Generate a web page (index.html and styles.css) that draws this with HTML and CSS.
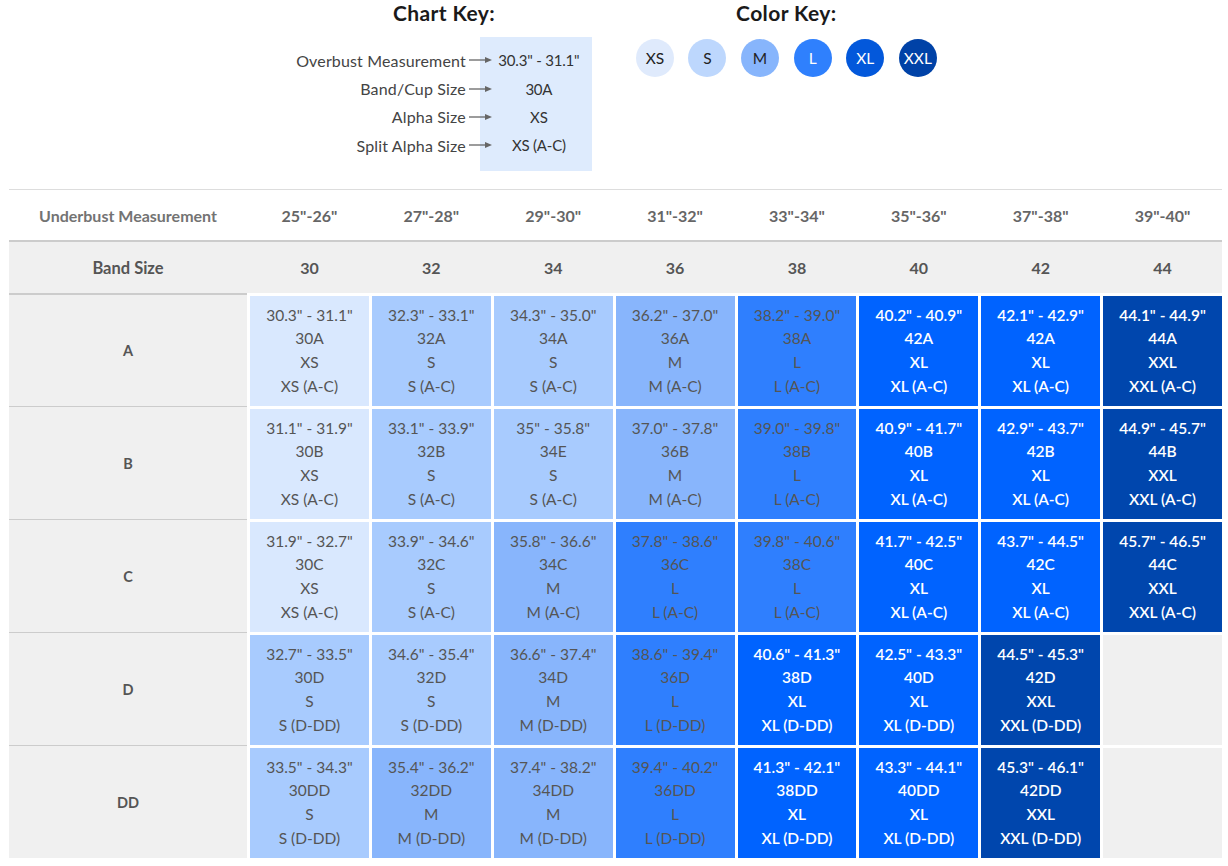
FILE: index.html
```html
<!DOCTYPE html>
<html lang="en">
<head>
<meta charset="utf-8">
<title>Bra Size Chart</title>
<link rel="stylesheet" href="styles.css">
</head>
<body>
<div class="page">
  <div class="keys">
    <div class="chart-key">
      <h2 class="key-title">Chart Key:</h2>
      <div class="key-body">
        <div class="key-labels">
          <div class="key-label">Overbust Measurement<svg class="arrow" width="23" height="8" viewBox="0 0 23 8"><line x1="0" y1="4" x2="18" y2="4" stroke="#666" stroke-width="1.3"/><path d="M16 1 L23 4 L16 7 Z" fill="#666"/></svg></div>
          <div class="key-label">Band/Cup Size<svg class="arrow" width="23" height="8" viewBox="0 0 23 8"><line x1="0" y1="4" x2="18" y2="4" stroke="#666" stroke-width="1.3"/><path d="M16 1 L23 4 L16 7 Z" fill="#666"/></svg></div>
          <div class="key-label">Alpha Size<svg class="arrow" width="23" height="8" viewBox="0 0 23 8"><line x1="0" y1="4" x2="18" y2="4" stroke="#666" stroke-width="1.3"/><path d="M16 1 L23 4 L16 7 Z" fill="#666"/></svg></div>
          <div class="key-label">Split Alpha Size<svg class="arrow" width="23" height="8" viewBox="0 0 23 8"><line x1="0" y1="4" x2="18" y2="4" stroke="#666" stroke-width="1.3"/><path d="M16 1 L23 4 L16 7 Z" fill="#666"/></svg></div>
        </div>
        <div class="key-box">
          <div class="key-value">30.3" - 31.1"</div>
          <div class="key-value">30A</div>
          <div class="key-value">XS</div>
          <div class="key-value">XS (A-C)</div>
        </div>
      </div>
    </div>
    <div class="color-key">
      <h2 class="key-title">Color Key:</h2>
      <div class="dots">
        <span class="dot dot-xs">XS</span>
        <span class="dot dot-s">S</span>
        <span class="dot dot-m">M</span>
        <span class="dot dot-l">L</span>
        <span class="dot dot-xl">XL</span>
        <span class="dot dot-xxl">XXL</span>
      </div>
    </div>
  </div>

  <div class="chart">
    <div class="row row-measure">
      <div class="head-label">Underbust Measurement</div>
      <div class="head">25"-26"</div>
      <div class="head">27"-28"</div>
      <div class="head">29"-30"</div>
      <div class="head">31"-32"</div>
      <div class="head">33"-34"</div>
      <div class="head">35"-36"</div>
      <div class="head">37"-38"</div>
      <div class="head">39"-40"</div>
    </div>
    <div class="row row-band">
      <div class="band-label">Band Size</div>
      <div class="band">30</div>
      <div class="band">32</div>
      <div class="band">34</div>
      <div class="band">36</div>
      <div class="band">38</div>
      <div class="band">40</div>
      <div class="band">42</div>
      <div class="band">44</div>
    </div>

    <div class="row row-cup">
      <div class="cup">A</div>
      <div class="cell xs"><span>30.3" - 31.1"</span><span>30A</span><span>XS</span><span>XS (A-C)</span></div>
      <div class="cell s"><span>32.3" - 33.1"</span><span>32A</span><span>S</span><span>S (A-C)</span></div>
      <div class="cell s"><span>34.3" - 35.0"</span><span>34A</span><span>S</span><span>S (A-C)</span></div>
      <div class="cell m"><span>36.2" - 37.0"</span><span>36A</span><span>M</span><span>M (A-C)</span></div>
      <div class="cell l"><span>38.2" - 39.0"</span><span>38A</span><span>L</span><span>L (A-C)</span></div>
      <div class="cell xl"><span>40.2" - 40.9"</span><span>42A</span><span>XL</span><span>XL (A-C)</span></div>
      <div class="cell xl"><span>42.1" - 42.9"</span><span>42A</span><span>XL</span><span>XL (A-C)</span></div>
      <div class="cell xxl"><span>44.1" - 44.9"</span><span>44A</span><span>XXL</span><span>XXL (A-C)</span></div>
    </div>
    <div class="row row-cup">
      <div class="cup">B</div>
      <div class="cell xs"><span>31.1" - 31.9"</span><span>30B</span><span>XS</span><span>XS (A-C)</span></div>
      <div class="cell s"><span>33.1" - 33.9"</span><span>32B</span><span>S</span><span>S (A-C)</span></div>
      <div class="cell s"><span>35" - 35.8"</span><span>34E</span><span>S</span><span>S (A-C)</span></div>
      <div class="cell m"><span>37.0" - 37.8"</span><span>36B</span><span>M</span><span>M (A-C)</span></div>
      <div class="cell l"><span>39.0" - 39.8"</span><span>38B</span><span>L</span><span>L (A-C)</span></div>
      <div class="cell xl"><span>40.9" - 41.7"</span><span>40B</span><span>XL</span><span>XL (A-C)</span></div>
      <div class="cell xl"><span>42.9" - 43.7"</span><span>42B</span><span>XL</span><span>XL (A-C)</span></div>
      <div class="cell xxl"><span>44.9" - 45.7"</span><span>44B</span><span>XXL</span><span>XXL (A-C)</span></div>
    </div>
    <div class="row row-cup">
      <div class="cup">C</div>
      <div class="cell xs"><span>31.9" - 32.7"</span><span>30C</span><span>XS</span><span>XS (A-C)</span></div>
      <div class="cell s"><span>33.9" - 34.6"</span><span>32C</span><span>S</span><span>S (A-C)</span></div>
      <div class="cell m"><span>35.8" - 36.6"</span><span>34C</span><span>M</span><span>M (A-C)</span></div>
      <div class="cell l"><span>37.8" - 38.6"</span><span>36C</span><span>L</span><span>L (A-C)</span></div>
      <div class="cell l"><span>39.8" - 40.6"</span><span>38C</span><span>L</span><span>L (A-C)</span></div>
      <div class="cell xl"><span>41.7" - 42.5"</span><span>40C</span><span>XL</span><span>XL (A-C)</span></div>
      <div class="cell xl"><span>43.7" - 44.5"</span><span>42C</span><span>XL</span><span>XL (A-C)</span></div>
      <div class="cell xxl"><span>45.7" - 46.5"</span><span>44C</span><span>XXL</span><span>XXL (A-C)</span></div>
    </div>
    <div class="row row-cup">
      <div class="cup">D</div>
      <div class="cell s"><span>32.7" - 33.5"</span><span>30D</span><span>S</span><span>S (D-DD)</span></div>
      <div class="cell s"><span>34.6" - 35.4"</span><span>32D</span><span>S</span><span>S (D-DD)</span></div>
      <div class="cell m"><span>36.6" - 37.4"</span><span>34D</span><span>M</span><span>M (D-DD)</span></div>
      <div class="cell l"><span>38.6" - 39.4"</span><span>36D</span><span>L</span><span>L (D-DD)</span></div>
      <div class="cell xl"><span>40.6" - 41.3"</span><span>38D</span><span>XL</span><span>XL (D-DD)</span></div>
      <div class="cell xl"><span>42.5" - 43.3"</span><span>40D</span><span>XL</span><span>XL (D-DD)</span></div>
      <div class="cell xxl"><span>44.5" - 45.3"</span><span>42D</span><span>XXL</span><span>XXL (D-DD)</span></div>
      <div class="cell empty"></div>
    </div>
    <div class="row row-cup">
      <div class="cup">DD</div>
      <div class="cell s"><span>33.5" - 34.3"</span><span>30DD</span><span>S</span><span>S (D-DD)</span></div>
      <div class="cell m"><span>35.4" - 36.2"</span><span>32DD</span><span>M</span><span>M (D-DD)</span></div>
      <div class="cell m"><span>37.4" - 38.2"</span><span>34DD</span><span>M</span><span>M (D-DD)</span></div>
      <div class="cell l"><span>39.4" - 40.2"</span><span>36DD</span><span>L</span><span>L (D-DD)</span></div>
      <div class="cell xl"><span>41.3" - 42.1"</span><span>38DD</span><span>XL</span><span>XL (D-DD)</span></div>
      <div class="cell xl"><span>43.3" - 44.1"</span><span>40DD</span><span>XL</span><span>XL (D-DD)</span></div>
      <div class="cell xxl"><span>45.3" - 46.1"</span><span>42DD</span><span>XXL</span><span>XXL (D-DD)</span></div>
      <div class="cell empty"></div>
    </div>
  </div>
</div>
</body>
</html>
```

FILE: styles.css
```css
* { box-sizing: border-box; }

html, body {
  margin: 0;
  padding: 0;
  background: #ffffff;
}

body {
  font-family: Lato, "Open Sans", Arial, sans-serif;
  color: #555555;
}

.page {
  padding: 0 6px 0 9px;
}

/* ---------- Keys ---------- */
.keys {
  display: flex;
  justify-content: center;
  align-items: flex-start;
  gap: 44px;
  height: 189px;
  padding-left: 2px;
}

.chart-key,
.color-key {
  display: flex;
  flex-direction: column;
  align-items: center;
}

.key-title {
  margin: 0;
  font-size: 21px;
  letter-spacing: 0.4px;
  line-height: 25px;
  font-weight: 700;
  color: #1a1a1a;
}

.key-body {
  display: flex;
  margin-top: 12px;
}

.key-labels {
  position: relative;
  z-index: 1;
  margin-right: -12px;
  padding: 9px 0 11px;
}

.key-label {
  height: 28.4px;
  display: flex;
  align-items: center;
  justify-content: flex-end;
  gap: 3px;
  font-size: 16px;
  letter-spacing: 0.15px;
  color: #444444;
}

.arrow {
  display: block;
  flex: none;
}

.key-box {
  width: 112px;
  background: #deebfd;
  padding: 9px 0 11px 6px;
}

.key-value {
  height: 28.4px;
  display: flex;
  align-items: center;
  justify-content: center;
  font-size: 15px;
  letter-spacing: -0.2px;
  color: #333333;
}

.dots {
  display: flex;
  gap: 14.6px;
  margin-top: 14px;
}

.dot {
  width: 38px;
  height: 38px;
  border-radius: 50%;
  display: flex;
  align-items: center;
  justify-content: center;
  font-size: 15.5px;
  color: #222222;
}

.dot-xs { background: #dfeafc; }
.dot-s { background: #bdd7fd; }
.dot-m { background: #87b5fc; }
.dot-l { background: #2f80fd; color: #ffffff; }
.dot-xl { background: #0358db; color: #ffffff; }
.dot-xxl { background: #0042a7; color: #ffffff; }

/* ---------- Chart ---------- */
.chart {
  width: 1213px;
}

.row {
  display: grid;
  grid-template-columns: 238px repeat(8, 1fr);
  column-gap: 3px;
}

.row-measure {
  height: 53px;
  border-top: 1px solid #dddddd;
  border-bottom: 2px solid #cccccc;
  align-items: center;
  text-align: center;
  font-weight: 700;
  font-size: 16px;
}

.head-label {
  color: #737373;
}

.head {
  color: #666666;
}

.row-band {
  height: 51px;
  background: #f0f0f0;
  align-items: center;
  text-align: center;
  font-weight: 700;
  font-size: 16px;
  color: #555555;
}

.band-label {
  font-size: 16.5px;
}

.cup {
  background: #f0f0f0;
  border-top: 1px solid #cccccc;
  display: flex;
  align-items: center;
  justify-content: center;
  font-weight: 700;
  font-size: 14.5px;
  color: #555555;
}

.row-band + .row-cup .cup {
  border-top-width: 2px;
}

.cell {
  margin-top: 3px;
  height: 110px;
  display: flex;
  flex-direction: column;
  justify-content: center;
  align-items: center;
  font-size: 15.5px;
  line-height: 23.7px;
  color: #555555;
}

.cell.xs { background: #d9e8fe; }
.cell.s { background: #a8cbfe; }
.cell.m { background: #88b5fc; }
.cell.l { background: #2f7ffe; }
.cell.xl { background: #0063ff; color: #ffffff; font-weight: 600; }
.cell.xxl { background: #0046ad; color: #ffffff; font-weight: 600; }
.cell.empty { background: #f0f0f0; }
```
